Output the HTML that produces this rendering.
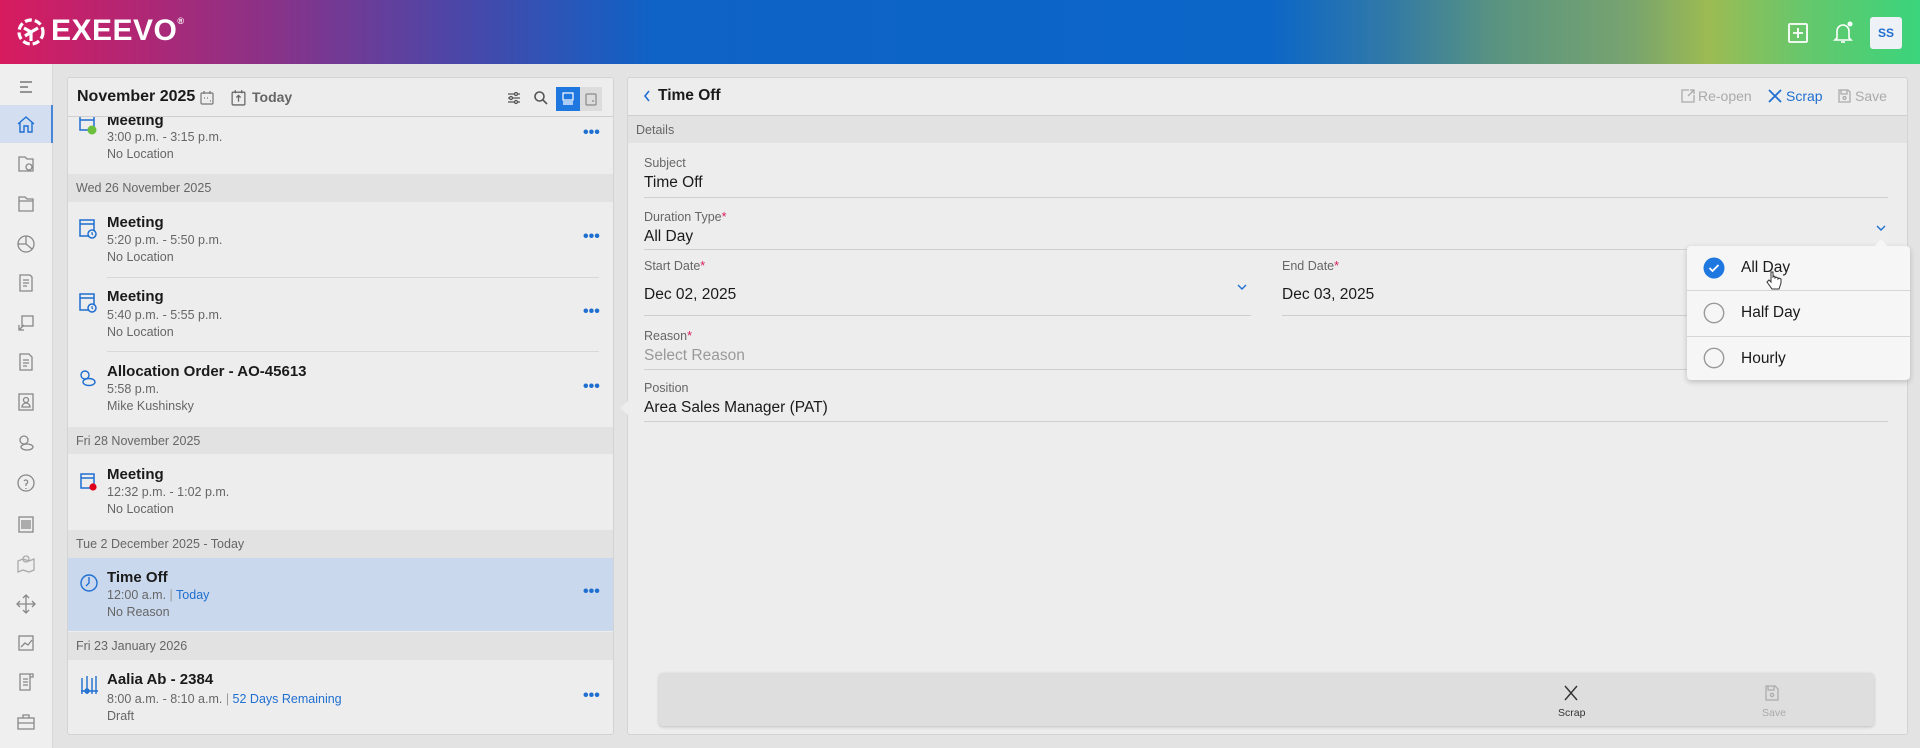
<!DOCTYPE html>
<html><head><meta charset="utf-8"><style>
*{box-sizing:border-box;margin:0;padding:0}
body{width:1920px;height:748px;overflow:hidden;background:#e3e3e3;font-family:"Liberation Sans",sans-serif;position:relative;color:#1a1a1a}
.a{position:absolute}
#hdr{left:0;top:0;width:1920px;height:64px;background:linear-gradient(90deg,#d81b5f 0%,#8a3288 14%,#4a47a8 24%,#0f62c6 34%,#0b66c8 66%,#2f78a8 72%,#5a9480 78%,#78a46e 85%,#9cbb52 89%,#66c76c 94%,#3ad47c 100%)}
#side{left:0;top:64px;width:53px;height:684px;background:#efefef;border-right:1px solid #d6d6d6}
.si{position:absolute;left:16px;width:20px;height:20px}
.pan{background:#ededed;border:1px solid #d3d3d3;border-radius:3px}
.ttl{font-size:15px;font-weight:bold;color:#1a1a1a}
.sub{font-size:12.5px;color:#666}
.dh{position:absolute;width:545px;background:#e2e2e2;font-size:12.5px;color:#666;padding-left:8px;display:flex;align-items:center}
.dots{position:absolute;left:583px;color:#1f6fd1;font-size:16px;font-weight:bold}
.lbl{position:absolute;left:644px;font-size:12.5px;color:#666}
.val{position:absolute;left:644px;font-size:15.5px;color:#1a1a1a}
.ul{position:absolute;height:1px;background:#cfcfcf}
.req{color:#d81b60}
</style></head><body>
<div id="hdr" class="a">
 <svg class="a" style="left:15px;top:16px" width="32" height="32" viewBox="0 0 32 32" fill="none" stroke="#fff" stroke-width="3.2"><circle cx="16" cy="16" r="12" stroke-dasharray="7 3"/><path d="M9 12l7 4 7-4M16 16v9M10 20l6-4"/></svg>
 <div class="a" style="left:51px;top:14px;color:#fff;font-size:30px;font-weight:bold;letter-spacing:0.5px">EXEEVO<sup style="font-size:9px;vertical-align:top;position:relative;top:2px">®</sup></div>
 <svg class="a" style="left:1787px;top:22px" width="22" height="22" viewBox="0 0 22 22" fill="none" stroke="#fff" stroke-width="1.8"><rect x="2" y="2" width="18" height="18" rx="1"/><path d="M11 6v10M6 11h10"/></svg>
 <svg class="a" style="left:1832px;top:21px" width="22" height="24" viewBox="0 0 22 24" fill="none" stroke="#fff" stroke-width="1.6"><path d="M5 17V10a6 6 0 0 1 12 0v7l2 2H3z"/><path d="M9 21h4"/><circle cx="18" cy="3" r="2.5" fill="#fff" stroke="none"/></svg>
 <div class="a" style="left:1870px;top:17px;width:32px;height:32px;background:#eef1f6;border-radius:3px;color:#1f6fd1;font-size:12px;font-weight:bold;text-align:center;line-height:32px">SS</div>
</div>
<div id="side" class="a">
 <div class="a" style="left:0;top:41px;width:53px;height:38px;background:#d3dff0;border-right:2px solid #4a86d8"></div>
 <svg class="si" style="top:13px" viewBox="0 0 20 20" stroke="#777" stroke-width="1.5"><path d="M4 5h12M4 10h8M4 15h12"/></svg>
 <svg class="si" style="top:50px" viewBox="0 0 20 20" fill="none" stroke="#1f6fd1" stroke-width="1.4"><path d="M2 10l8-7 8 7M4 8v10h4v-6h4v6h4V8"/></svg>
 <svg class="si" style="top:89px" viewBox="0 0 20 20" fill="none" stroke="#888" stroke-width="1.3"><path d="M3 4h6l2 2h6v12H3z"/><circle cx="13" cy="14" r="3"/></svg>
 <svg class="si" style="top:129px" viewBox="0 0 20 20" fill="none" stroke="#888" stroke-width="1.3"><path d="M3 4h6l2 2h6v12H3zM3 8h14"/></svg>
 <svg class="si" style="top:170px" viewBox="0 0 20 20" fill="none" stroke="#888" stroke-width="1.3"><circle cx="10" cy="10" r="8"/><path d="M10 2v8l6 5M10 10H2"/></svg>
 <svg class="si" style="top:209px" viewBox="0 0 20 20" fill="none" stroke="#888" stroke-width="1.3"><path d="M4 2h10l2 2v14H4zM7 7h6M7 10h6M7 13h4"/></svg>
 <svg class="si" style="top:249px" viewBox="0 0 20 20" fill="none" stroke="#888" stroke-width="1.3"><rect x="6" y="3" width="11" height="10"/><path d="M3 17l5-5M3 12v5h5"/></svg>
 <svg class="si" style="top:288px" viewBox="0 0 20 20" fill="none" stroke="#888" stroke-width="1.3"><path d="M4 2h9l3 3v13H4zM7 8h6M7 11h6M7 14h4"/></svg>
 <svg class="si" style="top:328px" viewBox="0 0 20 20" fill="none" stroke="#888" stroke-width="1.3"><rect x="3" y="2" width="14" height="16"/><circle cx="10" cy="8" r="2.5"/><path d="M6 15a4 4 0 0 1 8 0z"/></svg>
 <svg class="si" style="top:369px" viewBox="0 0 20 20" fill="none" stroke="#888" stroke-width="1.3"><circle cx="8" cy="7" r="4"/><ellipse cx="11" cy="14" rx="6" ry="3"/></svg>
 <svg class="si" style="top:410px" viewBox="0 0 20 20" fill="none" stroke="#888" stroke-width="1.3"><circle cx="10" cy="9" r="8"/><path d="M8 7a2 2 0 1 1 2 3v2M10 14v1"/></svg>
 <svg class="si" style="top:450px" viewBox="0 0 20 20" fill="none" stroke="#888" stroke-width="1.3"><rect x="3" y="3" width="14" height="15"/><path d="M6 6v9M8 6v9M10 6v9M12 6v9M14 6v9"/></svg>
 <svg class="si" style="top:489px" viewBox="0 0 20 20" fill="none" stroke="#aaa" stroke-width="1.3"><path d="M2 8l5-2 6 2 5-2v11l-5 2-6-2-5 2z"/><circle cx="10" cy="6" r="3"/></svg>
 <svg class="si" style="top:530px" viewBox="0 0 20 20" fill="none" stroke="#888" stroke-width="1.3"><path d="M10 1v18M1 10h18M7 4l3-3 3 3M7 16l3 3 3-3M4 7l-3 3 3 3M16 7l3 3-3 3"/></svg>
 <svg class="si" style="top:569px" viewBox="0 0 20 20" fill="none" stroke="#888" stroke-width="1.3"><rect x="3" y="3" width="14" height="14"/><path d="M5 14l4-4 3 2 4-5"/></svg>
 <svg class="si" style="top:608px" viewBox="0 0 20 20" fill="none" stroke="#888" stroke-width="1.3"><path d="M4 2h10v16H4zM14 2h3v3h-3M7 7h5M7 10h5M7 13h5"/></svg>
 <svg class="si" style="top:648px" viewBox="0 0 20 20" fill="none" stroke="#888" stroke-width="1.3"><rect x="2" y="6" width="16" height="11"/><path d="M7 6V3h6v3M2 11h16"/></svg>
</div>

<div class="a pan" style="left:67px;top:77px;width:547px;height:658px;overflow:hidden">
 <div class="a" style="left:0;top:0;width:547px;height:39px;border-bottom:1px solid #cfcfcf;background:#ededed;z-index:2"></div>
 <div class="a" style="left:9px;top:10px;font-size:16px;font-weight:bold;z-index:3">November 2025</div>
 <svg class="a" style="left:131px;top:12px;z-index:3" width="16" height="16" viewBox="0 0 16 16" fill="none" stroke="#777" stroke-width="1.2"><rect x="2" y="3" width="12" height="11" rx="1"/><path d="M5 1v3M11 1v3M5 8h1M8 8h1M11 11h1"/></svg>
 <svg class="a" style="left:162px;top:11px;z-index:3" width="17" height="17" viewBox="0 0 16 16" fill="none" stroke="#666" stroke-width="1.2"><rect x="2" y="3" width="12" height="12" rx="1"/><path d="M8 12V6M6 8l2-2 2 2M5 1v3M11 1v3"/></svg>
 <div class="a" style="left:184px;top:11px;font-size:14px;color:#666;font-weight:bold;z-index:3">Today</div>
 <svg class="a" style="left:438px;top:12px;z-index:3" width="16" height="16" viewBox="0 0 16 16" fill="none" stroke="#555" stroke-width="1.3"><path d="M2 4h12M2 8h12M2 12h12"/><circle cx="10" cy="4" r="1.5" fill="#ededed"/><circle cx="5" cy="8" r="1.5" fill="#ededed"/><circle cx="10" cy="12" r="1.5" fill="#ededed"/></svg>
 <svg class="a" style="left:465px;top:12px;z-index:3" width="16" height="16" viewBox="0 0 16 16" fill="none" stroke="#555" stroke-width="1.6"><circle cx="6.5" cy="6.5" r="4.5"/><path d="M10 10l4 4"/></svg>
 <div class="a" style="left:488px;top:9px;width:24px;height:24px;background:#1f78e0;z-index:3"></div>
 <svg class="a" style="left:492px;top:13px;z-index:4" width="16" height="16" viewBox="0 0 16 16" fill="none" stroke="#fff" stroke-width="1.2"><rect x="3" y="2" width="10" height="7"/><path d="M3 11h10M3 13h10"/></svg>
 <div class="a" style="left:512px;top:9px;width:22px;height:24px;background:#dcdcdc;z-index:3"></div>
 <svg class="a" style="left:515px;top:13px;z-index:4" width="16" height="16" viewBox="0 0 16 16" fill="none" stroke="#888" stroke-width="1.2"><rect x="3" y="3" width="10" height="11" rx="1"/><path d="M9 10h2"/></svg>
</div>
<svg class="a" style="left:78px;top:114px" width="20" height="22" viewBox="0 0 20 22" fill="none" stroke="#1f6fd1" stroke-width="1.5"><path d="M2 2h14v14H2zM2 6h14"/><circle cx="14" cy="16" r="4.5" fill="#6abf3c" stroke="none"/></svg>
<div class="a ttl" style="left:107px;top:112px;clip-path:inset(5px 0 0 0)">Meeting</div>
<div class="a sub" style="left:107px;top:130px">3:00 p.m. - 3:15 p.m.</div>
<div class="a sub" style="left:107px;top:147px">No Location</div>
<div class="dots" style="top:124px">•••</div>

<div class="dh" style="left:68px;top:174px;height:28px">Wed 26 November 2025</div>

<svg class="a" style="left:78px;top:218px" width="20" height="22" viewBox="0 0 20 22" fill="none" stroke="#1f6fd1" stroke-width="1.5"><path d="M2 2h14v16H2zM2 6h14"/><circle cx="14" cy="16" r="4" fill="#ededed"/><path d="M14 14v2l1 1" stroke-width="1.2"/></svg>
<div class="a ttl" style="left:107px;top:214px">Meeting</div>
<div class="a sub" style="left:107px;top:233px">5:20 p.m. - 5:50 p.m.</div>
<div class="a sub" style="left:107px;top:250px">No Location</div>
<div class="dots" style="top:228px">•••</div>
<div class="ul" style="left:107px;top:277px;width:492px;background:#d8d8d8"></div>

<svg class="a" style="left:78px;top:292px" width="20" height="22" viewBox="0 0 20 22" fill="none" stroke="#1f6fd1" stroke-width="1.5"><path d="M2 2h14v16H2zM2 6h14"/><circle cx="14" cy="16" r="4" fill="#ededed"/><path d="M14 14v2l1 1" stroke-width="1.2"/></svg>
<div class="a ttl" style="left:107px;top:288px">Meeting</div>
<div class="a sub" style="left:107px;top:308px">5:40 p.m. - 5:55 p.m.</div>
<div class="a sub" style="left:107px;top:325px">No Location</div>
<div class="dots" style="top:303px">•••</div>
<div class="ul" style="left:107px;top:351px;width:492px;background:#d8d8d8"></div>

<svg class="a" style="left:78px;top:368px" width="20" height="20" viewBox="0 0 20 20" fill="none" stroke="#1f6fd1" stroke-width="1.4"><circle cx="7" cy="7" r="4"/><ellipse cx="11" cy="14" rx="6" ry="3.5"/></svg>
<div class="a ttl" style="left:107px;top:363px">Allocation Order - AO-45613</div>
<div class="a sub" style="left:107px;top:382px">5:58 p.m.</div>
<div class="a sub" style="left:107px;top:399px">Mike Kushinsky</div>
<div class="dots" style="top:378px">•••</div>

<div class="dh" style="left:68px;top:427px;height:27px">Fri 28 November 2025</div>

<svg class="a" style="left:79px;top:472px" width="20" height="20" viewBox="0 0 20 20" fill="none" stroke="#1f6fd1" stroke-width="1.5"><path d="M2 2h13v14H2zM2 6h13"/><circle cx="14" cy="15" r="3.6" fill="#e0001b" stroke="none"/></svg>
<div class="a ttl" style="left:107px;top:466px">Meeting</div>
<div class="a sub" style="left:107px;top:485px">12:32 p.m. - 1:02 p.m.</div>
<div class="a sub" style="left:107px;top:502px">No Location</div>

<div class="dh" style="left:68px;top:530px;height:28px">Tue 2 December 2025 - Today</div>
<div class="a" style="left:68px;top:558px;width:545px;height:73px;background:#c9d8ec"></div>
<svg class="a" style="left:79px;top:573px" width="20" height="20" viewBox="0 0 20 20" fill="none" stroke="#1f6fd1" stroke-width="1.4"><circle cx="10" cy="10" r="8"/><path d="M10 4v6l-3 3"/></svg>
<div class="a ttl" style="left:107px;top:569px">Time Off</div>
<div class="a sub" style="left:107px;top:588px">12:00 a.m. <span style="color:#999">|</span> <span style="color:#1f6fd1">Today</span></div>
<div class="a sub" style="left:107px;top:605px">No Reason</div>
<div class="dots" style="top:583px">•••</div>

<div class="dh" style="left:68px;top:632px;height:28px">Fri 23 January 2026</div>
<svg class="a" style="left:79px;top:674px" width="20" height="22" viewBox="0 0 20 22" fill="none" stroke="#1f6fd1" stroke-width="1.4"><path d="M3 4v16M8 2v18M13 4v16M17 2v18M2 17h17"/><circle cx="8" cy="17" r="2"/></svg>
<div class="a ttl" style="left:107px;top:671px">Aalia Ab - 2384</div>
<div class="a sub" style="left:107px;top:692px">8:00 a.m. - 8:10 a.m. <span style="color:#999">|</span> <span style="color:#1f6fd1">52 Days Remaining</span></div>
<div class="a sub" style="left:107px;top:709px">Draft</div>
<div class="dots" style="top:687px">•••</div>

<div class="a pan" style="left:627px;top:77px;width:1281px;height:658px"></div>
<div class="a" style="left:628px;top:115px;width:1279px;height:1px;background:#cfcfcf"></div>
<svg class="a" style="left:642px;top:89px" width="10" height="14" viewBox="0 0 10 14" fill="none" stroke="#1f6fd1" stroke-width="1.6"><path d="M7 2L3 7l4 5"/></svg>
<div class="a" style="left:658px;top:87px;font-size:15.5px;font-weight:bold">Time Off</div>
<svg class="a" style="left:1680px;top:88px" width="16" height="16" viewBox="0 0 16 16" fill="none" stroke="#aaa" stroke-width="1.3"><path d="M9 2H2v12h12V7M8 8l6-6M10 2h4v4"/></svg>
<div class="a" style="left:1698px;top:88px;font-size:14px;color:#aaa">Re-open</div>
<svg class="a" style="left:1767px;top:88px" width="16" height="16" viewBox="0 0 16 16" fill="none" stroke="#1f6fd1" stroke-width="1.8"><path d="M2 2l12 12M14 2L2 14"/></svg>
<div class="a" style="left:1786px;top:88px;font-size:14px;color:#1f6fd1">Scrap</div>
<svg class="a" style="left:1837px;top:88px" width="15" height="16" viewBox="0 0 15 16" fill="none" stroke="#aaa" stroke-width="1.3"><path d="M2 2h9l2 2v10H2zM4 2v4h6V2"/><circle cx="7.5" cy="10" r="1.5"/></svg>
<div class="a" style="left:1855px;top:88px;font-size:14px;color:#aaa">Save</div>
<div class="a" style="left:628px;top:116px;width:1279px;height:27px;background:#e2e2e2;font-size:12.5px;color:#666;padding:7px 0 0 8px">Details</div>

<div class="lbl" style="top:156px">Subject</div>
<div class="val" style="top:174px">Time Off</div>
<div class="ul" style="left:644px;top:197px;width:1244px"></div>
<div class="lbl" style="top:210px">Duration Type<span class="req">*</span></div>
<div class="val" style="top:228px">All Day</div>
<svg class="a" style="left:1875px;top:223px" width="12" height="10" viewBox="0 0 12 10" fill="none" stroke="#1f6fd1" stroke-width="1.4"><path d="M2 3l4 4 4-4"/></svg>
<div class="ul" style="left:644px;top:249px;width:1244px"></div>
<div class="lbl" style="top:259px">Start Date<span class="req">*</span></div>
<div class="val" style="top:286px">Dec 02, 2025</div>
<svg class="a" style="left:1236px;top:282px" width="12" height="10" viewBox="0 0 12 10" fill="none" stroke="#1f6fd1" stroke-width="1.4"><path d="M2 3l4 4 4-4"/></svg>
<div class="ul" style="left:644px;top:315px;width:607px"></div>
<div class="lbl" style="left:1282px;top:259px">End Date<span class="req">*</span></div>
<div class="val" style="left:1282px;top:286px">Dec 03, 2025</div>
<div class="ul" style="left:1282px;top:315px;width:606px"></div>
<div class="lbl" style="top:329px">Reason<span class="req">*</span></div>
<div class="val" style="top:347px;color:#999">Select Reason</div>
<div class="ul" style="left:644px;top:369px;width:1244px"></div>
<div class="lbl" style="top:381px">Position</div>
<div class="val" style="top:399px">Area Sales Manager (PAT)</div>
<div class="ul" style="left:644px;top:421px;width:1244px"></div>
<div class="a" style="left:620px;top:401px;width:0;height:0;border-top:7px solid transparent;border-bottom:7px solid transparent;border-right:8px solid #ededed"></div>

<div class="a" style="left:1687px;top:246px;width:223px;height:134px;background:#f6f6f6;border-radius:4px;box-shadow:0 2px 6px rgba(0,0,0,.2)"></div>
<div class="a" style="left:1875px;top:239px;width:0;height:0;border-left:6px solid transparent;border-right:6px solid transparent;border-bottom:7px solid #f6f6f6"></div>
<div class="ul" style="left:1687px;top:290px;width:223px;background:#d6d6d6"></div>
<div class="ul" style="left:1687px;top:336px;width:223px;background:#d6d6d6"></div>
<svg class="a" style="left:1703px;top:257px" width="22" height="22" viewBox="0 0 22 22"><circle cx="11" cy="11" r="10.5" fill="#1f78e0"/><path d="M6.5 11l3 3 6-6" stroke="#fff" stroke-width="1.8" fill="none"/></svg>
<div class="a" style="left:1741px;top:259px;font-size:15.5px">All Day</div>
<svg class="a" style="left:1766px;top:270px" width="16" height="22" viewBox="0 0 16 22" fill="#fff" stroke="#333" stroke-width="1"><path d="M5 2v10l-2-2-2 2 5 7h7l2-6V9l-2-1-1 1V8l-2-1-1 1V7L8 6 7 7V2z"/></svg>
<svg class="a" style="left:1703px;top:302px" width="22" height="22" viewBox="0 0 22 22"><circle cx="11" cy="11" r="9.7" fill="none" stroke="#999" stroke-width="1.4"/></svg>
<div class="a" style="left:1741px;top:304px;font-size:15.5px">Half Day</div>
<svg class="a" style="left:1703px;top:347px" width="22" height="22" viewBox="0 0 22 22"><circle cx="11" cy="11" r="9.7" fill="none" stroke="#999" stroke-width="1.4"/></svg>
<div class="a" style="left:1741px;top:350px;font-size:15.5px">Hourly</div>

<div class="a" style="left:659px;top:673px;width:1215px;height:53px;background:#dedede;border-radius:4px;box-shadow:0 1px 3px rgba(0,0,0,.2)"></div>
<svg class="a" style="left:1562px;top:684px" width="18" height="18" viewBox="0 0 18 18" fill="none" stroke="#333" stroke-width="1.4"><path d="M3 2l12 14M15 2L3 16"/></svg>
<div class="a" style="left:1558px;top:707px;font-size:10.5px;color:#333">Scrap</div>
<svg class="a" style="left:1764px;top:684px" width="16" height="18" viewBox="0 0 16 18" fill="none" stroke="#aaa" stroke-width="1.2"><path d="M2 2h9l3 3v11H2zM4 2v4h6V2"/><circle cx="8" cy="11" r="1.6"/></svg>
<div class="a" style="left:1762px;top:707px;font-size:10.5px;color:#aaa">Save</div>
</body></html>
